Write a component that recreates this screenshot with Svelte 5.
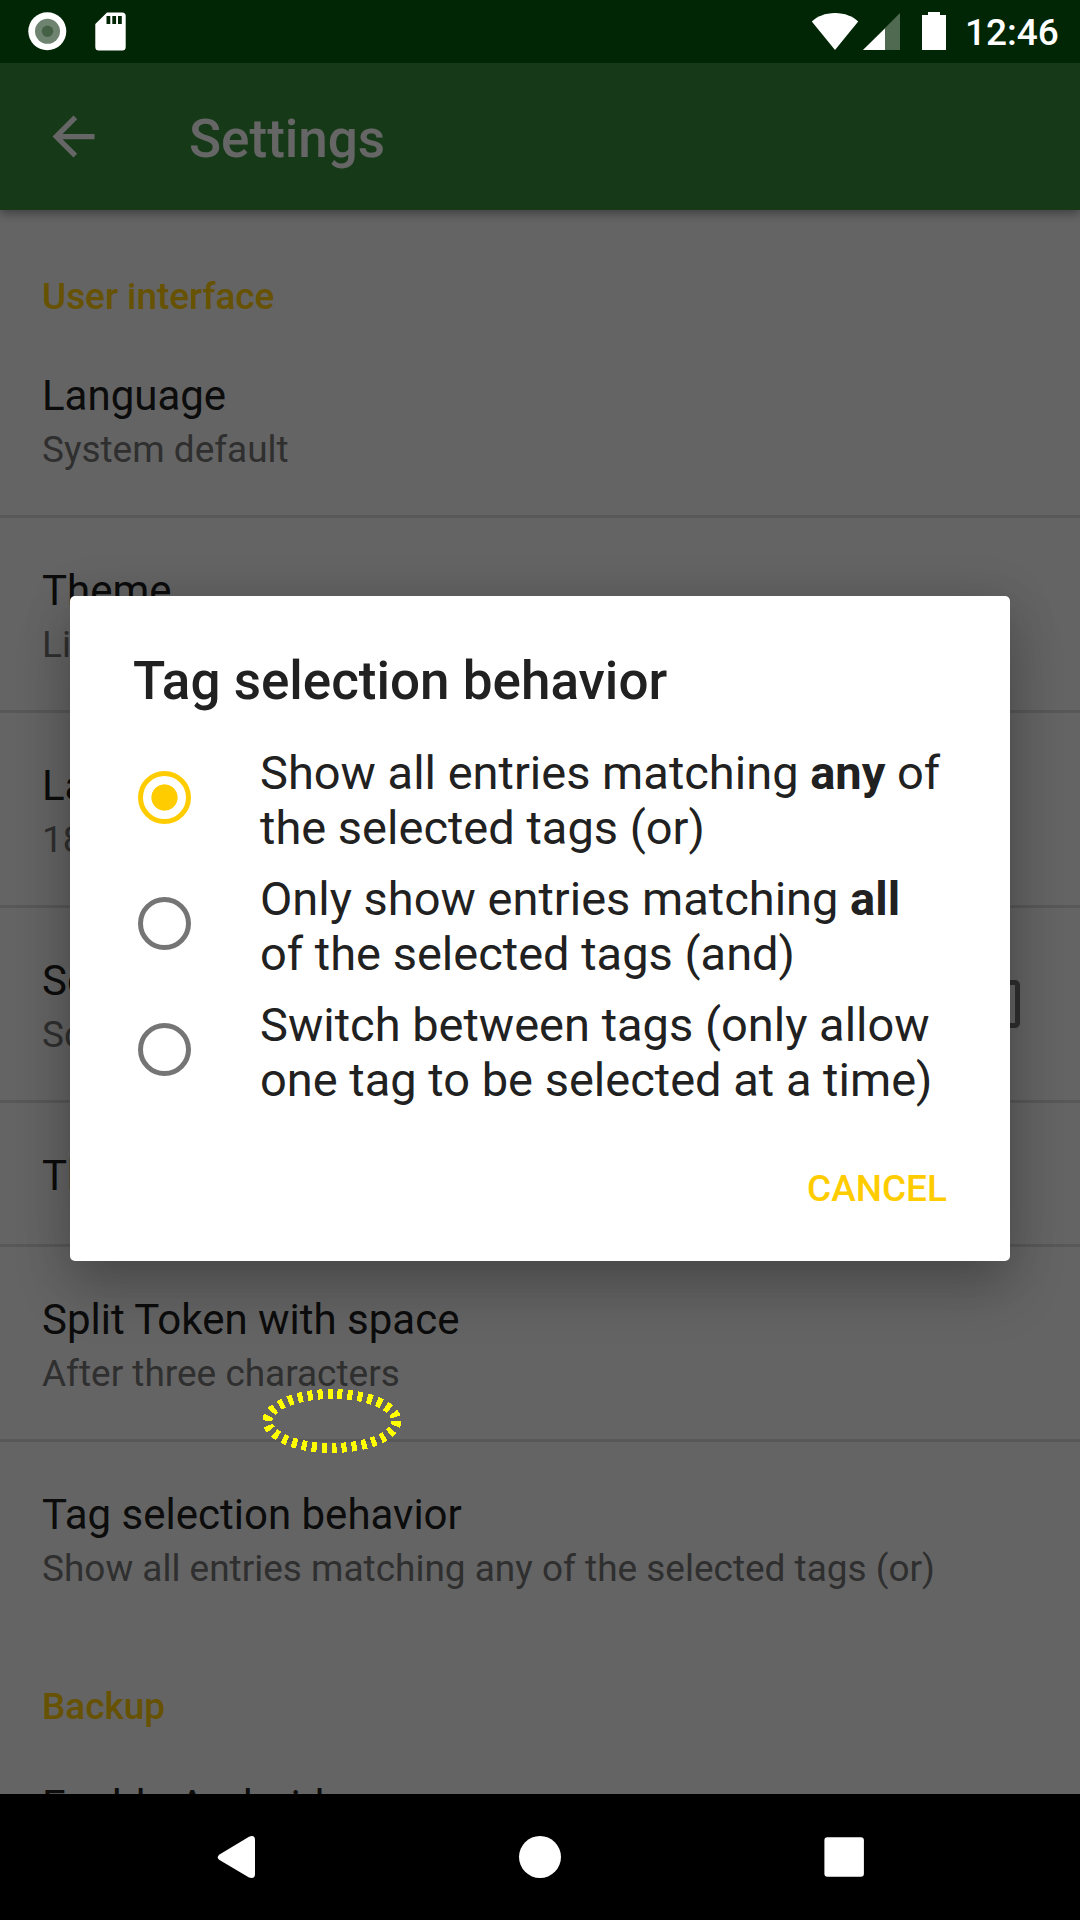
<script>
  const preferences = [
    { title: 'Language', summary: 'System default' },
    { title: 'Theme', summary: 'Light' },
    { title: 'Label size', summary: '18' },
    { title: 'Scroll label', summary: 'Scroll labels', checkbox: true },
    { title: 'Thumbnail size' },
    { title: 'Split Token with space', summary: 'After three characters' },
    { title: 'Tag selection behavior', summary: 'Show all entries matching any of the selected tags (or)' },
  ];

  const options = [
    { before: 'Show all entries matching ', strong: 'any', after: ' of', second: 'the selected tags (or)' },
    { before: 'Only show entries matching ', strong: 'all', after: '', second: 'of the selected tags (and)' },
    { before: 'Switch between tags (only allow', strong: '', after: '', second: 'one tag to be selected at a time)' },
  ];

  let selected = $state(0);
</script>

<div class="screen">
  <header class="status">
    <svg class="status-left" width="130" height="63" viewBox="0 0 130 63">
      <circle cx="47.3" cy="31.3" r="19" fill="#fff" />
      <circle cx="47.5" cy="31.3" r="12.5" fill="#6f8470" />
      <circle cx="47.5" cy="31.3" r="5.7" fill="#446045" />
      <path fill="#fff" fill-rule="evenodd" d="M107 12.5h15.2a3.5 3.5 0 0 1 3.5 3.5v31a3.5 3.5 0 0 1-3.5 3.5H98.800a3.500 3.500 0 0 1-3.500-3.500V24ZM106.500 16v8h3.800v-8ZM112.300 16v8h3.800v-8ZM118 16v8h3.800v-8Z" />
    </svg>
    <div class="status-right">
      <svg width="140" height="63" viewBox="810 0 140 63">
        <path fill="#fff" d="M835 50 811.800 21.500C817 16.500 825 13 835 13s18 3.500 23.200 8.500Z" />
        <path fill="#506a52" d="M900 13v37h-37Z" />
        <path fill="#fff" d="M885 28.500V50h-22Z" />
        <path fill="#fff" d="M922 15h6v-3h12v3h6v35h-24Z" />
      </svg>
      <span class="clock">12:46</span>
    </div>
  </header>

  <div class="window">
    <div class="app">
      <div class="toolbar">
        <svg class="back" width="63" height="63" viewBox="0 0 24 24">
          <path fill="#fff" d="M20 11H7.830l5.590-5.590L12 4l-8 8 8 8 1.410-1.410L7.830 13H20v-2z" />
        </svg>
        <h1>Settings</h1>
      </div>
      <main>
        <h2>User interface</h2>
        {#each preferences as pref, i}
          <div class="pref" class:last={i === preferences.length - 1}>
            <div class="labels">
              <div class="title">{pref.title}</div>
              {#if pref.summary}<div class="summary">{pref.summary}</div>{/if}
            </div>
            {#if pref.checkbox}<span class="checkbox"></span>{/if}
          </div>
        {/each}
        <h2>Backup</h2>
        <div class="pref last">
          <div class="labels"><div class="title">Enable Android</div></div>
        </div>
      </main>
    </div>

    <div class="scrim">
      <div class="dialog">
        <h3>Tag selection behavior</h3>
        <div class="options">
          {#each options as option, i}
            <button class="option" onclick={() => (selected = i)}>
              <span class="radio" class:on={selected === i}></span>
              <span class="option-text">
                {option.before}{#if option.strong}<b>{option.strong}</b>{/if}{option.after}<br />{option.second}
              </span>
            </button>
          {/each}
        </div>
        <div class="actions"><button class="cancel">CANCEL</button></div>
      </div>
    </div>

    <svg class="marker" width="142" height="68" viewBox="261 1387 142 68">
      <ellipse cx="331.900" cy="1421" rx="64.500" ry="27" fill="none" stroke="#ff0" stroke-width="10" stroke-dasharray="5 5" shape-rendering="crispEdges" />
    </svg>
  </div>

  <nav>
    <svg width="1080" height="126" viewBox="0 1794 1080 126" fill="#fff">
      <path d="M219.500 1854.500 249 1836.700Q255 1834.500 255 1840V1874Q255 1879.500 249 1877.600L219.500 1860Q215.800 1857.300 219.500 1854.500Z" />
      <circle cx="540" cy="1857" r="21" />
      <rect x="824.400" y="1837.200" width="39.500" height="39.600" rx="3" />
    </svg>
  </nav>
</div>

<style>
  :global(body) { background: #000; }
  h1, h2, h3 { margin: 0; font-weight: 500; }
  button { border: 0; background: none; padding: 0; margin: 0; font: inherit; color: inherit; text-align: left; }

  .screen {
    width: 1080px;
    height: 1920px;
    display: flex;
    flex-direction: column;
    overflow: hidden;
    font-family: Roboto, sans-serif;
    color: #212121;
  }

  .status {
    height: 63px;
    flex: none;
    display: flex;
    justify-content: space-between;
    background: #002605;
  }
  .status-right { display: flex; width: 270px; }
  .status svg { display: block; flex: none; }
  .clock {
    margin-left: 15px;
    color: #fff;
    font-size: 37px;
    font-weight: 500;
    line-height: 66px;
  }

  .window { position: relative; height: 1731px; flex: none; overflow: hidden; }
  .app { height: 1731px; background: #fafafa; overflow: hidden; }
  .toolbar {
    position: relative;
    height: 147px;
    display: flex;
    align-items: center;
    padding-left: 42px;
    background: #388e3c;
    box-shadow: 0 3px 10px rgba(0, 0, 0, 0.4);
  }
  .toolbar h1 { margin-left: 84px; padding-top: 5px; font-size: 53px; line-height: 62px; color: #fff; }

  main { padding-top: 14px; }
  h2 {
    height: 99px;
    box-sizing: border-box;
    padding: 51px 42px 0;
    font-size: 36.900px;
    line-height: 44px;
    color: #ffcc00;
  }
  .pref {
    display: flex;
    align-items: center;
    justify-content: space-between;
    padding-right: 60px;
    border-bottom: 3px solid #dcdcdc;
  }
  .pref.last { border-bottom: 0; }
  .labels { padding: 48px 0 43px 42px; }
  .title { font-size: 42px; line-height: 50px; color: #202020; }
  .summary { margin-top: 7px; font-size: 36.970px; line-height: 44px; color: #757575; }
  .checkbox {
    width: 48px;
    height: 48px;
    box-sizing: border-box;
    border: 5px solid #757575;
    border-radius: 5px;
  }

  .scrim {
    position: absolute;
    inset: 0;
    display: flex;
    align-items: center;
    justify-content: center;
    background: rgba(0, 0, 0, 0.6);
  }
  .dialog {
    width: 940px;
    height: 665px;
    box-sizing: border-box;
    display: flex;
    flex-direction: column;
    padding: 54px 63px 0 63px;
    background: #fff;
    border-radius: 5px;
    box-shadow: 0 30px 56px rgba(0, 0, 0, 0.2), 0 4px 50px rgba(0, 0, 0, 0.14);
  }
  .dialog h3 { font-size: 53px; line-height: 62px; color: #212121; }
  .options { display: flex; flex-direction: column; gap: 16px; margin-top: 33px; }
  .option { display: flex; align-items: flex-start; height: 110px; }
  .radio {
    flex: none;
    width: 53px;
    height: 53px;
    margin: 26px 69px 0 5px;
    box-sizing: border-box;
    border: 5.25px solid #757575;
    border-radius: 50%;
  }
  .radio.on {
    border-color: #ffcc00;
    background: radial-gradient(circle, #ffcc00 12.700px, transparent 13.500px);
  }
  .option-text { font-size: 47px; line-height: 55px; white-space: nowrap; color: #212121; }
  .actions { display: flex; justify-content: flex-end; margin-top: 60px; }
  .cancel { font-size: 37px; font-weight: 500; line-height: 44px; color: #ffcc00; }

  .marker { position: absolute; left: 261px; top: 1324px; }

  nav { height: 126px; flex: none; background: #000; }
  nav svg { display: block; }
</style>
